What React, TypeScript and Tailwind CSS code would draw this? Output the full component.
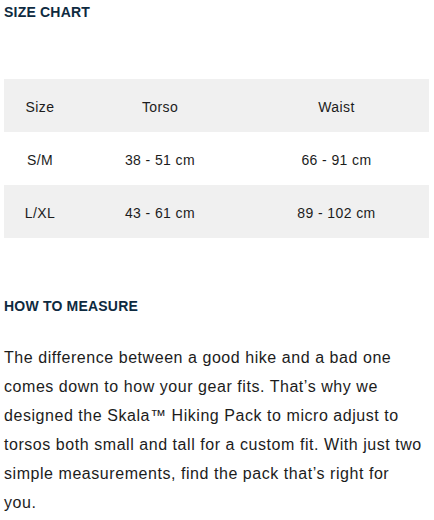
const rows = [
  { size: "S/M", torso: "38 - 51 cm", waist: "66 - 91 cm" },
  { size: "L/XL", torso: "43 - 61 cm", waist: "89 - 102 cm" },
];

export default function App() {
  return (
    <div className="w-[434px] bg-white px-1 pt-[2px] font-['Liberation_Sans',Arial,sans-serif] text-[#1c1c1c]">
      <h2 className="text-[14px] leading-5 font-bold tracking-[0.2px] text-[#0e2a40]">SIZE CHART</h2>

      <table className="mt-[57px] w-[425px] table-fixed border-collapse text-center text-[14px] tracking-[0.4px]">
        <colgroup>
          <col className="w-[72px]" />
          <col className="w-[168px]" />
          <col />
        </colgroup>
        <thead>
          <tr className="h-[53px] bg-[#f0f0f0]">
            <th className="pt-[3px] font-normal">Size</th>
            <th className="pt-[3px] font-normal">Torso</th>
            <th className="pt-[3px] font-normal">Waist</th>
          </tr>
        </thead>
        <tbody>
          {rows.map((r, i) => (
            <tr key={r.size} className={i % 2 === 1 ? "h-[53px] bg-[#f0f0f0]" : "h-[53px] bg-white"}>
              <td className="pt-[3px]">{r.size}</td>
              <td className="pt-[3px]">{r.torso}</td>
              <td className="pt-[3px]">{r.waist}</td>
            </tr>
          ))}
        </tbody>
      </table>

      <h2 className="mt-[58px] text-[14px] leading-5 font-bold tracking-[0.2px] text-[#0e2a40]">HOW TO MEASURE</h2>

      <p className="mt-[27px] w-[419px] text-[16px] leading-[29px] tracking-[0.55px]">
        The difference between a good hike and a bad one comes down to how your gear fits. That’s why we
        designed the Skala™ Hiking Pack to micro adjust to torsos both small and tall for a custom fit. With
        just two simple measurements, find the pack that’s right for you.
      </p>
    </div>
  );
}
